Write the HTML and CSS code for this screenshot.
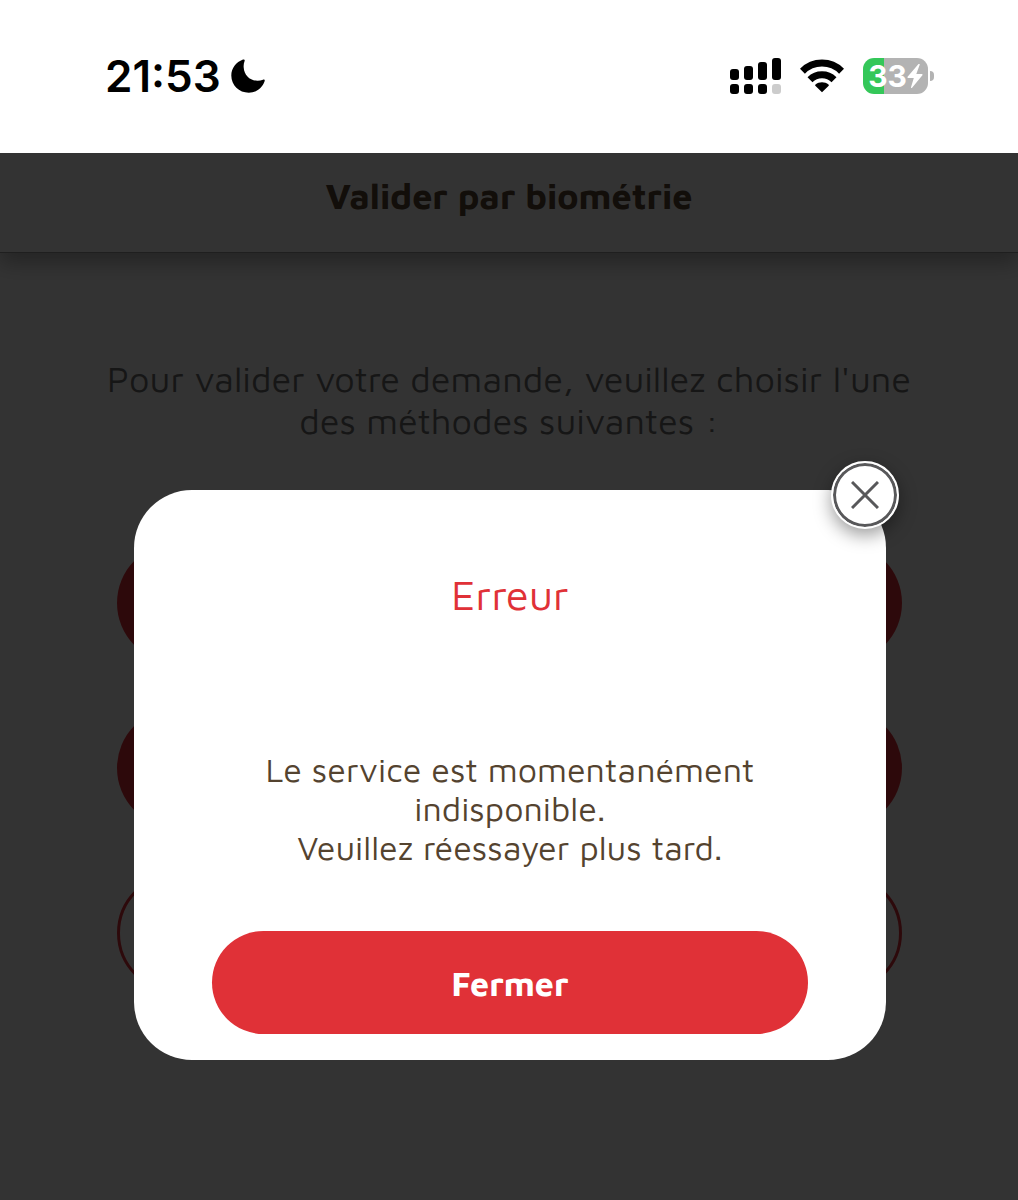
FILE: index.html
```html
<!DOCTYPE html>
<html lang="fr">
<head>
    <meta charset="UTF-8">
    <meta name="viewport" content="width=device-width, initial-scale=1.0">
    <title>Valider par biométrie</title>
    <link rel="stylesheet" href="styles.css">
</head>
<body>
    <div class="status-bar">
        <div class="status-left">
            <span class="time">21:53</span>
            <svg class="moon" viewBox="0 0 34 34" width="34" height="34" aria-hidden="true">
                <path d="M12 .6C13.2 .1 14.1 .8 13.6 2 12.8 4 12.5 6 12.7 8.500 13.200 16.500 19 21.700 26.500 21.700 28.500 21.700 30.300 21.300 32 20.700 33.300 20.300 34.100 21 33.600 22.300 31 29.300 25 33.700 17.800 33.700 8 33.700 .3 26.200 .3 16.500 .3 9.500 5 3.200 12 .6Z"/>
            </svg>
        </div>
        <div class="status-right">
            <svg viewBox="0 0 51 36" width="51" height="36" aria-hidden="true">
                <rect x="0" y="11" width="9" height="11" rx="3"/>
                <rect x="14" y="8" width="9" height="14" rx="3"/>
                <rect x="28" y="4" width="9" height="18" rx="3"/>
                <rect x="42" y="0" width="9" height="22" rx="3"/>
                <rect x="0" y="26" width="9" height="10" rx="3"/>
                <rect x="14" y="26" width="9" height="10" rx="3"/>
                <rect x="28" y="26" width="9" height="10" rx="3"/>
                <rect x="42" y="26" width="9" height="10" rx="3" fill="#ccc"/>
            </svg>
            <svg class="wifi" viewBox="0 0 44 34" width="44" height="34" aria-hidden="true">
                <path d="M2.400 12.200A27.500 27.500 0 0 1 41.600 12.200" fill="none" stroke="#000" stroke-width="7"/>
                <path d="M10 20.700A17 17 0 0 1 34 20.700" fill="none" stroke="#000" stroke-width="7"/>
                <path d="M22 33.200 15.300 26.700C15 26.300 15 25.800 15.500 25.400 19 22.500 25 22.500 28.500 25.400 29 25.800 29 26.300 28.700 26.700Z"/>
            </svg>
            <div class="battery">
                <span class="battery-level">33</span>
                <svg viewBox="0 0 16 24" width="16" height="24" aria-hidden="true">
                    <path d="M11.500 0 .6 12.800C.2 13.400 .5 14 1.200 14H6.800L4 23.200C3.800 24 4.600 24.300 5.100 23.700L15.400 11.200C15.800 10.600 15.500 10 14.800 10H9.300L12.700 .8C13 0 12.100-.5 11.500 0Z" fill="#fff"/>
                </svg>
            </div>
        </div>
    </div>

    <div class="app">
        <header class="app-header">
            <h1>Valider par biométrie</h1>
        </header>
        <main class="content">
            <p class="intro">Pour valider votre demande, veuillez choisir l'une<br>des méthodes suivantes :</p>
            <div class="methods">
                <button class="btn" aria-label="Première méthode"></button>
                <button class="btn" aria-label="Deuxième méthode"></button>
                <button class="btn btn-outline" aria-label="Annuler"></button>
            </div>
        </main>

        <div class="overlay">
            <div class="modal" role="dialog" aria-modal="true" aria-labelledby="modal-title">
                <button class="close" aria-label="Fermer la fenêtre">
                    <svg viewBox="0 0 28 28" width="28" height="28" aria-hidden="true">
                        <path d="M1 1 27 27M27 1 1 27" stroke="#58585a" stroke-width="3"/>
                    </svg>
                </button>
                <h2 id="modal-title">Erreur</h2>
                <p class="message">Le service est momentanément<br>indisponible.<br>Veuillez réessayer plus tard.</p>
                <button class="btn btn-close">Fermer</button>
            </div>
        </div>
    </div>
</body>
</html>
```

FILE: styles.css
```css
* {
    box-sizing: border-box;
}
body {
    margin: 0;
    min-height: 100vh;
    display: flex;
    flex-direction: column;
    background-color: #fff;
    font-family: "Maven Pro", "Open Sans", sans-serif;
}
h1, h2, p {
    margin: 0;
}
button {
    font-family: inherit;
    cursor: pointer;
}

/* status bar */
.status-bar {
    position: relative;
    z-index: 1;
    display: flex;
    justify-content: space-between;
    align-items: center;
    height: 153px;
    padding: 0 84px 2px 105px;
    background-color: #fff;
    font-family: Inter, sans-serif;
}
.status-left, .status-right {
    display: flex;
    align-items: center;
}
.time {
    font-size: 44px;
    line-height: 52px;
    font-weight: 600;
}
.moon {
    margin-left: 10px;
}
.wifi {
    margin: 0 19px;
}
.battery {
    position: relative;
    display: flex;
    align-items: center;
    justify-content: center;
    width: 65px;
    height: 36px;
    margin-right: 6px;
    border-radius: 11px;
    background: linear-gradient(to right, #34c759 33%, #b3b3b3 33%);
    color: #fff;
}
.battery::after {
    content: "";
    position: absolute;
    left: 67px;
    top: 13px;
    width: 4px;
    height: 10px;
    border-radius: 0 4px 4px 0;
    background-color: #b3b3b3;
}
.battery-level {
    font-size: 30px;
    line-height: 36px;
    font-weight: 700;
}

/* page behind the dialog */
.app {
    position: relative;
    flex: 1;
}
.app-header {
    height: 100px;
    padding-top: 18px;
    text-align: center;
    color: #5a4535;
    border-bottom: 1px solid #999;
    box-shadow: 0 10px 20px rgba(0, 0, 0, 0.3);
}
.app-header h1 {
    font-size: 36px;
    line-height: 50px;
    font-weight: 700;
}
.content {
    padding: 105px 100px 40px;
}
.intro {
    text-align: center;
    font-size: 36px;
    line-height: 42px;
    font-weight: 300;
    color: #707070;
}
.methods {
    display: flex;
    flex-direction: column;
    gap: 45px;
    padding: 101px 16px 0 17px;
}
.btn {
    height: 120px;
    border: none;
    border-radius: 60px;
    background-color: #e03137;
    color: #fff;
    font-size: 34px;
    font-weight: 700;
}
.btn-outline {
    border: 3px solid #e03137;
    background-color: #fff;
}

/* dialog */
.overlay {
    position: absolute;
    inset: 0;
    padding: 337px 132px 0 134px;
    background-color: rgba(0, 0, 0, 0.8);
}
.modal {
    position: relative;
    display: flex;
    flex-direction: column;
    padding: 79px 78px 26px;
    border-radius: 58px;
    background-color: #fff;
    text-align: center;
}
.modal h2 {
    font-size: 42px;
    line-height: 50px;
    font-weight: 300;
    color: #e03137;
}
.message {
    margin: 131px 0 64px;
    font-size: 34px;
    line-height: 39px;
    font-weight: 300;
    color: #54432f;
}
.btn-close {
    height: 103px;
}
.close {
    position: absolute;
    top: -29px;
    right: -13px;
    display: flex;
    align-items: center;
    justify-content: center;
    width: 68px;
    height: 68px;
    padding: 0;
    border: 2px solid #fff;
    border-radius: 50%;
    background-color: #fff;
    box-shadow: inset 0 0 0 3px #58585a, 0 6px 18px rgba(0, 0, 0, 0.4);
}
```
